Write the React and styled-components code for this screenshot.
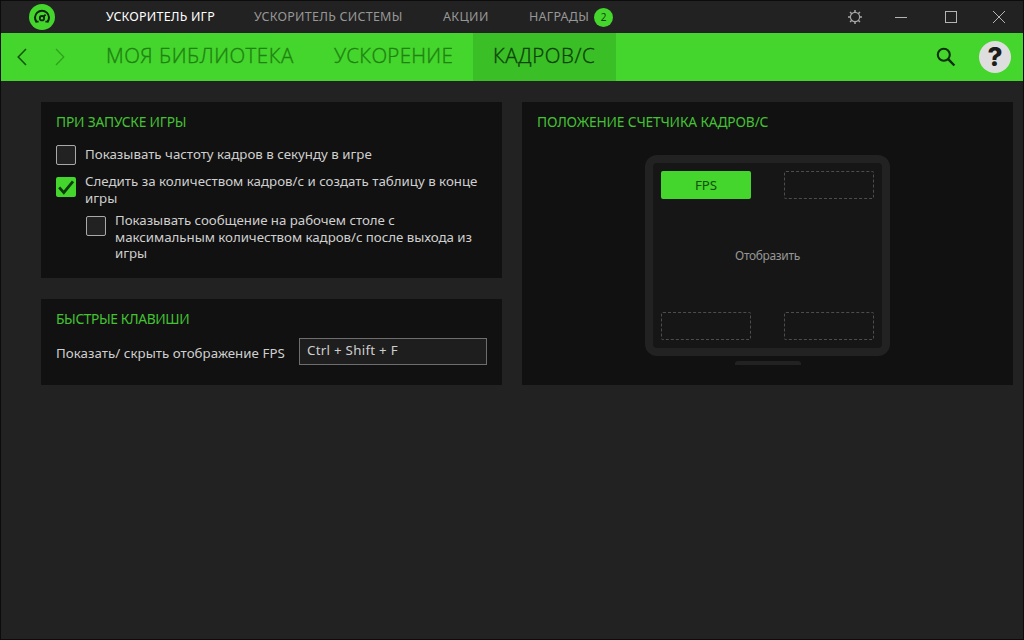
import { useState } from "react";
import styled, { createGlobalStyle } from "styled-components";

const sections = [
  { name: "УСКОРИТЕЛЬ ИГР", width: 148, track: "0.2px" },
  { name: "УСКОРИТЕЛЬ СИСТЕМЫ", width: 189, track: "0.25px" },
  { name: "АКЦИИ", width: 86, track: "0.35px" },
  { name: "НАГРАДЫ", width: 65, track: "0.25px" },
];

const tabs = [
  { name: "МОЯ БИБЛИОТЕКА", width: 228, track: "0.5px" },
  { name: "УСКОРЕНИЕ", width: 159, track: "0.3px" },
  { name: "КАДРОВ/С", width: 143, track: "0.6px" },
];

const corners = ["topLeft", "topRight", "bottomLeft", "bottomRight"];

const Logo = () => (
  <svg width="28" height="28" viewBox="0 0 28 28" fill="none">
    <circle cx="14" cy="14" r="13" fill="#44d62c" />
    <path d="M8.6 19.2A7 7 0 1 1 19.4 19.2" stroke="#10240d" strokeWidth="2" />
    <path d="M7.6 18.6h3M17.4 18.6h3" stroke="#10240d" strokeWidth="1.6" />
    <circle cx="14" cy="15.2" r="2.2" stroke="#10240d" strokeWidth="1.8" />
    <path d="M15 14.2l2.6-2.6" stroke="#10240d" strokeWidth="1.8" />
  </svg>
);

const Gear = () => (
  <svg width="16" height="16" viewBox="0 0 16 16" fill="none" stroke="#a6a6a6">
    <circle cx="8" cy="8" r="4.6" strokeWidth="1.2" />
    <path
      d="M8 1v2.4M8 12.6V15M1 8h2.4M12.6 8H15M3.05 3.05l1.7 1.7M11.25 11.25l1.7 1.7M12.95 3.05l-1.7 1.7M4.75 11.25l-1.7 1.7"
      strokeWidth="1.5"
    />
  </svg>
);

const App = () => {
  const [section] = useState("УСКОРИТЕЛЬ ИГР");
  const [tab, setTab] = useState("КАДРОВ/С");
  const [corner, setCorner] = useState("topLeft");
  const [opts, setOpts] = useState({ show: false, track: true, notify: false });

  const toggle = (name) => setOpts({ ...opts, [name]: !opts[name] });

  const check = (name, top) => (
    <Check $on={opts[name]} $top={top} onClick={() => toggle(name)}>
      {opts[name] && (
        <svg width="20" height="20" viewBox="0 0 20 20" fill="none">
          <path d="M3.2 10.4l4.6 5.2L17 4.4" stroke="#0c3a08" strokeWidth="2.8" />
        </svg>
      )}
    </Check>
  );

  return (
    <Window>
      <GlobalStyle />
      <TitleBar>
        <LogoBox>
          <Logo />
        </LogoBox>
        {sections.map((s) => (
          <Section key={s.name} $w={s.width} $track={s.track} $active={s.name === section}>
            {s.name}
          </Section>
        ))}
        <Badge>2</Badge>
        <WindowButtons>
          <Gear />
          <svg width="19" height="14" viewBox="0 0 19 14" stroke="#b4b4b4">
            <path d="M1 7.5h12" />
          </svg>
          <svg width="17" height="14" viewBox="0 0 17 14" fill="none" stroke="#b4b4b4">
            <rect x="1.5" y="1.5" width="11" height="11" />
          </svg>
          <svg width="14" height="14" viewBox="0 0 14 14" stroke="#b4b4b4">
            <path d="M1 1l12 12M13 1L1 13" />
          </svg>
        </WindowButtons>
      </TitleBar>

      <NavBar>
        <Arrows>
          <svg width="10" height="18" viewBox="0 0 10 18" fill="none" stroke="#0f5208" strokeWidth="1.5">
            <path d="M9 1L1.2 9L9 17" />
          </svg>
          <svg width="10" height="18" viewBox="0 0 10 18" fill="none" stroke="#2fa31e" strokeWidth="1.3">
            <path d="M1 1l7.8 8L1 17" />
          </svg>
        </Arrows>
        {tabs.map((t) => (
          <Tab
            key={t.name}
            $w={t.width}
            $track={t.track}
            $active={t.name === tab}
            onClick={() => setTab(t.name)}
          >
            {t.name}
          </Tab>
        ))}
        <NavTools>
          <svg width="20" height="20" viewBox="0 0 20 20" fill="none" stroke="#0b2e07">
            <circle cx="7.8" cy="7.8" r="6" strokeWidth="2.1" />
            <path d="M12.2 12.2l6.2 6.3" strokeWidth="2.4" />
          </svg>
          <Help>?</Help>
        </NavTools>
      </NavBar>

      <Content>
        <LeftColumn>
          <Panel $h={176}>
            <Title $track="-0.2px">ПРИ ЗАПУСКЕ ИГРЫ</Title>
            <Option $top={14}>
              {check("show", 0)}
              <Label $top={1}>Показывать частоту кадров в секунду в игре</Label>
            </Option>
            <Option $top={8}>
              {check("track", 4)}
              <Label>
                Следить за количеством кадров/с и создать таблицу в конце
                <br />
                игры
              </Label>
            </Option>
            <Option $top={6} $nested>
              {check("notify", 4)}
              <Label $track="-0.04px">
                Показывать сообщение на рабочем столе с
                <br />
                максимальным количеством кадров/с после выхода из
                <br />
                игры
              </Label>
            </Option>
          </Panel>
          <Panel $h={86}>
            <Title $track="-0.4px">БЫСТРЫЕ КЛАВИШИ</Title>
            <HotkeyRow>
              <Label $top={4} $track="0.04px">
                Показать/ скрыть отображение FPS
              </Label>
              <Hotkey>Ctrl + Shift + F</Hotkey>
            </HotkeyRow>
          </Panel>
        </LeftColumn>

        <RightPanel>
          <Title $track="-0.17px">ПОЛОЖЕНИЕ СЧЕТЧИКА КАДРОВ/С</Title>
          <Monitor>
            <Slots>
              {corners.slice(0, 2).map((c) => (
                <Slot key={c} $active={c === corner} onClick={() => setCorner(c)}>
                  {c === corner && "FPS"}
                </Slot>
              ))}
            </Slots>
            <Caption>Отобразить</Caption>
            <Slots>
              {corners.slice(2).map((c) => (
                <Slot key={c} $active={c === corner} onClick={() => setCorner(c)}>
                  {c === corner && "FPS"}
                </Slot>
              ))}
            </Slots>
          </Monitor>
          <Stand />
        </RightPanel>
      </Content>
    </Window>
  );
};

const GlobalStyle = createGlobalStyle`
  * {
    box-sizing: border-box;
  }

  body {
    margin: 0;
    background: #222222;
    font-family: "Noto Sans", "Open Sans", sans-serif;
  }
`;

const Window = styled.div`
  width: 1024px;
  height: 640px;
  overflow: hidden;
  border: 1px solid #0c0c0c;
  background: #222222;
  color: #cfcfcf;
  font-size: 13.3px;
`;

const TitleBar = styled.header`
  display: flex;
  align-items: center;
  height: 32px;
`;

const LogoBox = styled.div`
  width: 105px;
  height: 28px;
  padding-left: 27px;
`;

const Section = styled.span`
  width: ${(p) => p.$w}px;
  font-size: 12.5px;
  line-height: 18px;
  letter-spacing: ${(p) => p.$track};
  white-space: nowrap;
  color: ${(p) => (p.$active ? "#ffffff" : "#979797")};
`;

const Badge = styled.span`
  width: 19px;
  height: 19px;
  border-radius: 50%;
  background: #44d62c;
  color: #14400e;
  font-size: 10px;
  line-height: 18px;
  text-align: center;
`;

const WindowButtons = styled.div`
  display: flex;
  align-items: center;
  gap: 31px;
  margin: 0 17px 0 auto;
`;

const NavBar = styled.nav`
  display: flex;
  height: 48px;
  background: #44d62c;
`;

const Arrows = styled.div`
  display: flex;
  align-items: center;
  gap: 28px;
  width: 85px;
  padding-left: 16px;
`;

const Tab = styled.div`
  width: ${(p) => p.$w}px;
  padding-left: 20px;
  font-family: "Open Sans", "Noto Sans", sans-serif;
  font-size: 20.5px;
  font-weight: 300;
  line-height: 45px;
  letter-spacing: ${(p) => p.$track};
  -webkit-text-stroke: 0.35px currentColor;
  white-space: nowrap;
  cursor: pointer;
  color: ${(p) => (p.$active ? "#0d4208" : "#1f8212")};
  background: ${(p) => (p.$active ? "#3abf27" : "transparent")};
`;

const NavTools = styled.div`
  display: flex;
  align-items: center;
  gap: 23px;
  margin: 0 12px 0 auto;
`;

const Help = styled.div`
  width: 32px;
  height: 32px;
  border-radius: 50%;
  background: #dedede;
  color: #1c1c1c;
  font-family: Inter, sans-serif;
  font-size: 26px;
  font-weight: 800;
  line-height: 32px;
  text-align: center;
`;

const Content = styled.main`
  display: flex;
  gap: 20px;
  padding: 21px 10px 0 40px;
`;

const LeftColumn = styled.div`
  display: flex;
  flex-direction: column;
  gap: 21px;
  width: 461px;
`;

const Panel = styled.section`
  height: ${(p) => p.$h}px;
  padding: 11px 15px 0;
  background: #111111;
`;

const RightPanel = styled(Panel)`
  display: flex;
  flex-direction: column;
  align-items: center;
  width: 491px;
  height: 283px;
`;

const Title = styled.h2`
  align-self: flex-start;
  margin: 0;
  font-size: 13.8px;
  font-weight: 400;
  line-height: 18px;
  letter-spacing: ${(p) => p.$track};
  white-space: nowrap;
  color: #44c234;
`;

const Option = styled.div`
  display: flex;
  align-items: flex-start;
  gap: 9px;
  margin-top: ${(p) => p.$top}px;
  padding-left: ${(p) => (p.$nested ? 30 : 0)}px;
`;

const Check = styled.div`
  flex: none;
  width: 20px;
  height: 20px;
  margin-top: ${(p) => p.$top}px;
  border: ${(p) => (p.$on ? "none" : "1px solid #a9a9a9")};
  border-radius: 2px;
  background: ${(p) => (p.$on ? "#44d62c" : "#222222")};
  cursor: pointer;
`;

const Label = styled.div`
  padding-top: ${(p) => p.$top || 0}px;
  line-height: 16.6px;
  letter-spacing: ${(p) => p.$track || "normal"};
  white-space: nowrap;
`;

const HotkeyRow = styled.div`
  display: flex;
  align-items: center;
  justify-content: space-between;
  margin-top: 10px;
`;

const Hotkey = styled.div`
  width: 188px;
  height: 27px;
  padding-left: 7px;
  border: 1px solid #6e6e6e;
  background: #1e1e1e;
  line-height: 23px;
  letter-spacing: 0.28px;
`;

const Monitor = styled.div`
  display: flex;
  flex-direction: column;
  justify-content: space-between;
  width: 245px;
  height: 201px;
  margin-top: 24px;
  padding: 8px;
  border: 8px solid #222222;
  border-radius: 12px;
  background: #161616;
`;

const Slots = styled.div`
  display: flex;
  justify-content: space-between;
`;

const Slot = styled.div`
  width: 90px;
  height: 28px;
  border: ${(p) => (p.$active ? "none" : "1px dashed #4d4d4d")};
  border-radius: 2px;
  background: ${(p) => (p.$active ? "#44d62c" : "transparent")};
  color: #14500c;
  line-height: 28px;
  text-align: center;
  cursor: pointer;
`;

const Caption = styled.div`
  color: #979797;
  font-size: 12px;
  letter-spacing: -0.35px;
  text-align: center;
`;

const Stand = styled.div`
  width: 66px;
  height: 4px;
  margin-top: 5px;
  border-radius: 3px 3px 0 0;
  background: #222222;
`;

export default App;
